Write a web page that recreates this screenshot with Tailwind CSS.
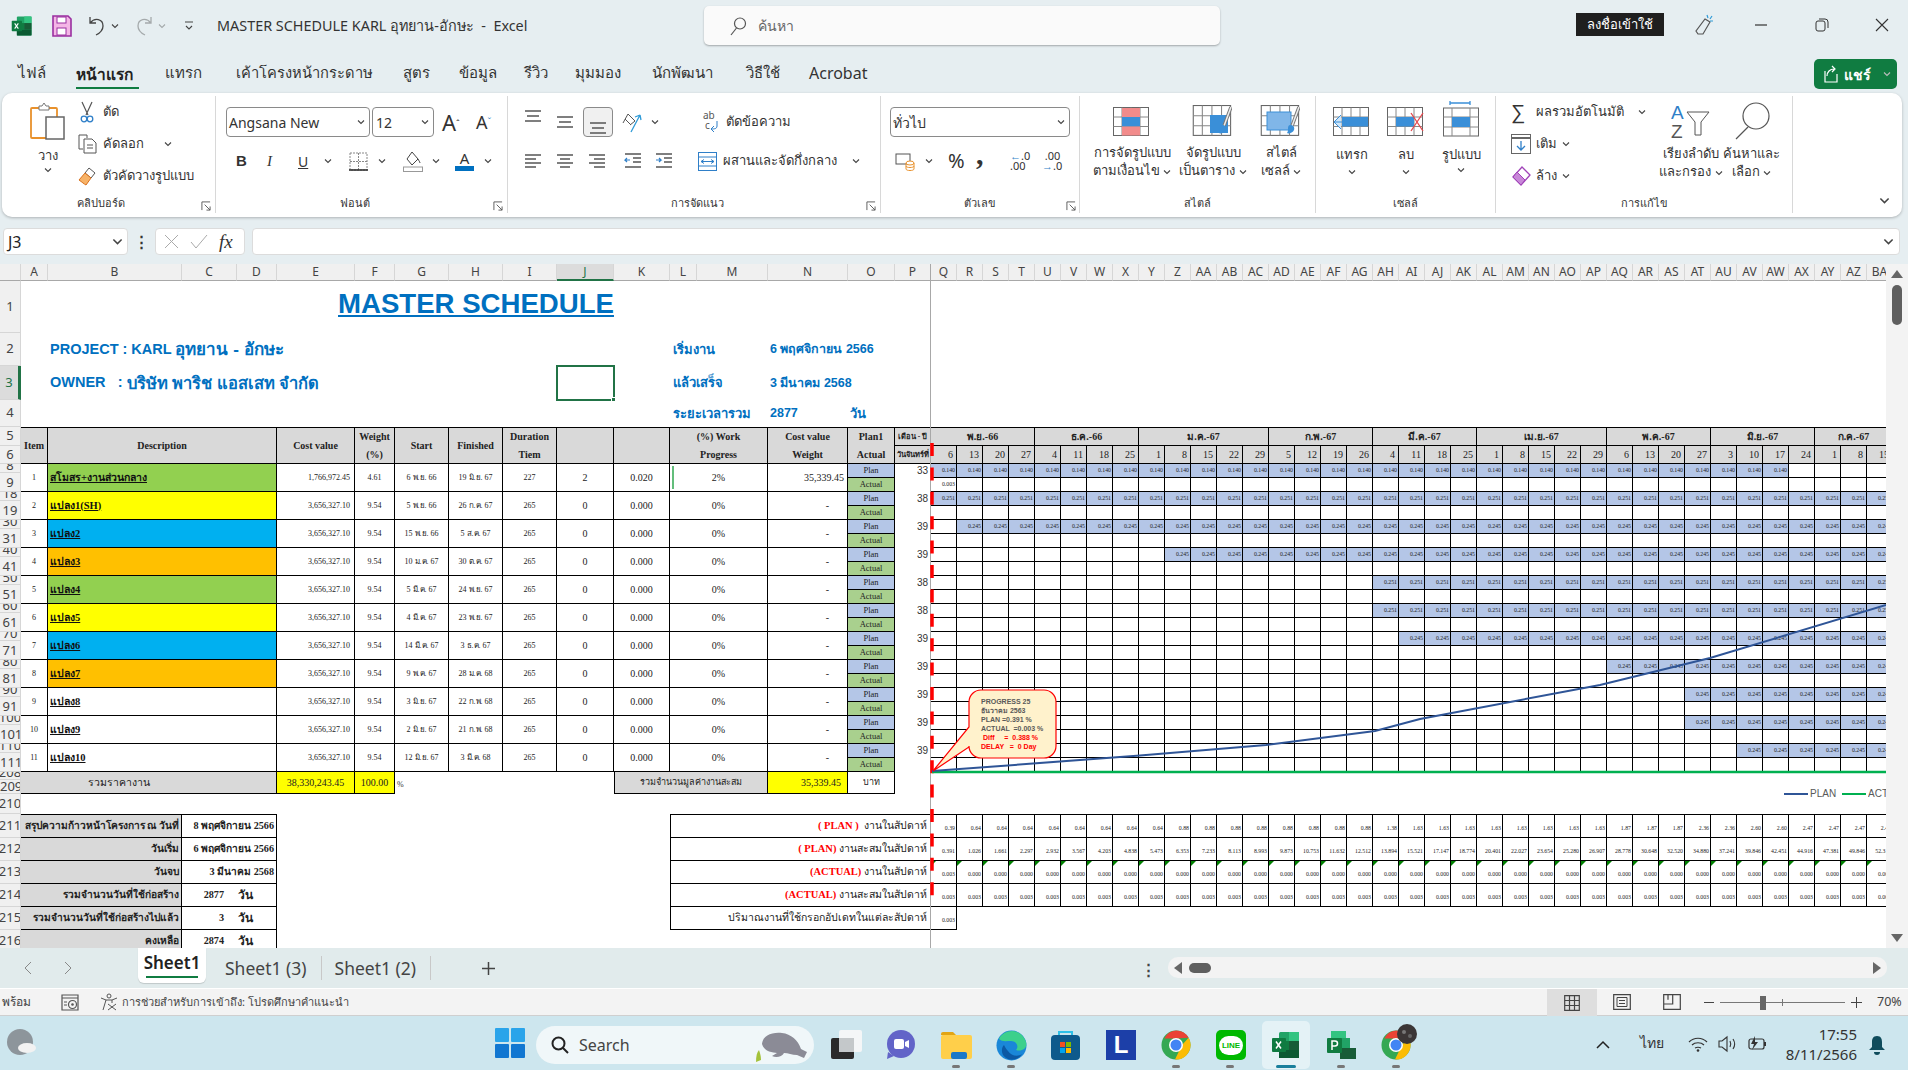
<!DOCTYPE html>
<html lang="th">
<head>
  <meta charset="utf-8" />
  <title>MASTER SCHEDULE KARL อุทยาน-อักษะ - Excel</title>
  <script src="https://cdn.jsdelivr.net/npm/@tailwindcss/browser@4"></script>
</head>
<body class="w-[1908px] h-[1070px] overflow-hidden flex flex-col bg-[#e6eef1] text-[#333] font-['Noto_Sans',sans-serif]">
  <!-- icon sprite -->
  <svg class="hidden">
    <symbol id="chev" viewBox="0 0 8 8"><path d="M1 2.5l3 3 3-3" fill="none" stroke="#444" stroke-width="1.1"/></symbol>
    <symbol id="launch" viewBox="0 0 11 11"><path d="M1 10V1h9M4 4l6 6M10 6v4H6" fill="none" stroke="#555"/></symbol>
    <symbol id="xl" viewBox="0 0 30 30"><rect x="8" y="2" width="20" height="26" rx="1.5" fill="#21a366"/><rect x="18" y="2" width="10" height="9" fill="#33c481"/><rect x="8" y="11" width="10" height="9" fill="#107c41"/><rect x="18" y="11" width="10" height="9" fill="#185c37"/><rect x="8" y="20" width="20" height="8" fill="#0b5a33"/><rect x="1" y="8" width="14" height="14" rx="1" fill="#0f7b41"/><path d="M5 11.500l5 7M10 11.500l-5 7" stroke="#fff" stroke-width="1.500"/></symbol>
    <symbol id="chrome" viewBox="0 0 30 30"><circle cx="15" cy="15" r="14.500" fill="#34a853"/><path d="M15 .5a14.500 14.500 0 0 1 12.600 7.200L15 8.500H3.300A14.500 14.500 0 0 1 15 .5z" fill="#ea4335"/><path d="M27.600 7.800A14.500 14.500 0 0 1 14 29.500L21 15z" fill="#fbbc05"/><circle cx="15" cy="15" r="7" fill="#fff"/><circle cx="15" cy="15" r="5.500" fill="#4285f4"/></symbol>
    <symbol id="gridicon" viewBox="0 0 38 30"><rect x=".5" y=".5" width="35" height="28" fill="#fff" stroke="#666"/><path d="M.5 10h35M.5 19.500h35M9 .5v28M18 .5v28M27 .5v28" stroke="#888" fill="none"/></symbol>
    <symbol id="lt" viewBox="0 0 18 18"><path d="M1 3h16M1 7h11M1 11h16M1 15h11" stroke="#555" stroke-width="1.500"/></symbol>
    <symbol id="ct" viewBox="0 0 18 18"><path d="M1 3h16M4 7h10M1 11h16M4 15h10" stroke="#555" stroke-width="1.500"/></symbol>
    <symbol id="rt" viewBox="0 0 18 18"><path d="M1 3h16M6 7h11M1 11h16M6 15h11" stroke="#555" stroke-width="1.500"/></symbol>
    <symbol id="brush" viewBox="0 0 14 30"><path d="M13 1L6 20" stroke="#777" stroke-width="3.500"/><path d="M13 1L6 20" stroke="#eee" stroke-width="1.500"/><path d="M4 19c3 0 5 2 4 5-1 3-6 4-7 3 1-1 1-3 1-5 0-2 1-3 2-3z" fill="#3a8fd8"/></symbol>
  </svg>

  <!-- title bar -->
  <header class="h-[52px] shrink-0 flex items-center relative">
    <svg class="w-[22px] h-[22px] ml-[11px]"><use href="#xl"/></svg>
    <svg class="w-[22px] h-[22px] ml-[18px]" viewBox="0 0 22 22"><path d="M2 1h15l3 3v17H2z" fill="#f4b6e6" stroke="#9a2fa0" stroke-width="1.600"/><rect x="6" y="2" width="9" height="6" fill="#fff" stroke="#9a2fa0"/><rect x="6" y="13" width="9" height="7" fill="#fff" stroke="#9a2fa0"/></svg>
    <svg class="w-[20px] h-[22px] ml-[14px]" viewBox="0 0 20 22"><path d="M3 2v6h6M3 8c5-6 13-4 13 3 0 4-3 7-7 9" fill="none" stroke="#444" stroke-width="1.300"/></svg>
    <svg class="w-[8px] h-[8px] ml-[4px]"><use href="#chev"/></svg>
    <svg class="w-[20px] h-[22px] ml-[15px] opacity-40" viewBox="0 0 20 22"><path d="M17 2v6h-6M17 8C12 2 4 4 4 11c0 4 3 7 7 9" fill="none" stroke="#444" stroke-width="1.300"/></svg>
    <svg class="w-[8px] h-[8px] ml-[4px] opacity-40"><use href="#chev"/></svg>
    <svg class="w-[10px] h-[10px] ml-[18px]" viewBox="0 0 10 10"><path d="M1 1h8M2 5l3 3 3-3" fill="none" stroke="#444" stroke-width="1.100"/></svg>
    <div class="ml-[23px] w-[400px] text-[14.400px] whitespace-nowrap">MASTER SCHEDULE KARL อุทยาน-อักษะ&nbsp; -&nbsp; Excel</div>
    <div class="absolute left-[704px] top-[6px] w-[516px] h-[39px] bg-[#fafafa] rounded-[5px] shadow-[0_1px_2px_rgba(0,0,0,.3)] flex items-center">
      <svg class="w-[18px] h-[20px] ml-[25px]" viewBox="0 0 18 20"><circle cx="11" cy="7.500" r="5.500" fill="none" stroke="#555" stroke-width="1.200"/><path d="M7.500 12L2 19" stroke="#555" stroke-width="1.200"/></svg>
      <span class="ml-[11px] text-[14px] text-[#666]">ค้นหา</span>
    </div>
    <div class="absolute left-[1576px] top-[13px] w-[88px] h-[23px] bg-[#1f1f1f] text-white text-[13px] flex items-center justify-center">ลงชื่อเข้าใช้</div>
    <svg class="absolute left-[1692px] top-[14px] w-[22px] h-[22px]" viewBox="0 0 22 22"><path d="M13 5l5 3-7 12-5 0-2-3z" fill="none" stroke="#555" stroke-width="1.200"/><path d="M15 1l1 3M20 2l-2 3M21 7l-3 0" stroke="#2f9bd8" stroke-width="1.200"/></svg>
    <svg class="absolute left-[1755px] top-[19px] w-[12px] h-[12px]" viewBox="0 0 12 12"><path d="M0 6h12" stroke="#333" stroke-width="1.200"/></svg>
    <svg class="absolute left-[1815px] top-[18px] w-[14px] h-[14px]" viewBox="0 0 14 14"><rect x="1" y="3" width="9" height="10" rx="2" fill="none" stroke="#333"/><path d="M4 1h6a3 3 0 0 1 3 3v6" fill="none" stroke="#333"/></svg>
    <svg class="absolute left-[1875px] top-[18px] w-[14px] h-[14px]" viewBox="0 0 14 14"><path d="M1 1l12 12M13 1L1 13" stroke="#333" stroke-width="1.100"/></svg>
  </header>

  <!-- ribbon tabs -->
  <nav class="h-[41px] shrink-0 relative flex items-center text-[15px] text-[#333] whitespace-nowrap">
    <span class="ml-[18px] w-[58px]">ไฟล์</span>
    <span class="w-[89px] h-[41px] flex items-start pt-[11px] relative font-bold text-[15.500px] text-[#222]">หน้าแรก<i class="absolute left-0 top-[35px] w-[63px] h-[2px] bg-[#107c41]"></i></span>
    <span class="w-[71px]">แทรก</span>
    <span class="w-[167px] text-[14.700px]">เค้าโครงหน้ากระดาษ</span>
    <span class="w-[56px]">สูตร</span>
    <span class="w-[65px]">ข้อมูล</span>
    <span class="w-[51px]">รีวิว</span>
    <span class="w-[77px]">มุมมอง</span>
    <span class="w-[94px]">นักพัฒนา</span>
    <span class="w-[63px]">วิธีใช้</span>
    <span class="text-[16px]">Acrobat</span>
    <div class="absolute left-[1814px] top-[7px] w-[83px] h-[30px] rounded-[5px] bg-[#107c41] text-white text-[14px] font-bold flex items-center pl-[10px]">
      <svg class="w-[14px] h-[18px]" viewBox="0 0 14 18"><path d="M1 6v11h12V9M3 11c0-4 3-7 7-7M8 1l3 3-3 3" fill="none" stroke="#fff" stroke-width="1.200"/></svg>
      <span class="ml-[6px]">แชร์</span>
      <svg class="w-[8px] h-[8px] ml-[12px] invert"><use href="#chev"/></svg>
    </div>
  </nav>

  <!-- ribbon -->
  <section class="h-[124px] shrink-0 mx-[2px] w-[1900px] bg-white rounded-[10px] shadow-[0_1px_3px_rgba(0,0,0,.25)] flex pt-[3px] pb-[4px] text-[13px] text-[#333] whitespace-nowrap relative">
    <!-- clipboard -->
    <div class="w-[214px] border-r border-[#d8d8d8] relative">
      <div class="h-[97px] flex pl-[24px]">
        <div class="w-[44px] flex flex-col items-center">
          <svg class="w-[38px] h-[38px] mt-[6px]" viewBox="0 0 38 38"><rect x="2" y="6" width="26" height="30" rx="1" fill="#fff" stroke="#e8912c" stroke-width="1.800"/><path d="M10 6V4h3l2-3 2 3h3v4H10z" fill="#fff" stroke="#777"/><rect x="17" y="15" width="18" height="22" fill="#fff" stroke="#666" stroke-width="1.500"/></svg>
          <span class="mt-[6px] leading-[18px]">วาง</span>
          <svg class="w-[8px] h-[8px] mt-[2px]"><use href="#chev"/></svg>
        </div>
        <div class="ml-[8px] flex flex-col">
          <div class="h-[32px] flex items-center"><svg class="w-[18px] h-[22px]" viewBox="0 0 18 22"><path d="M4 1l6 13M14 1L8 14" stroke="#555" stroke-width="1.200"/><circle cx="6" cy="18" r="2.800" fill="none" stroke="#2f7fc8" stroke-width="1.300"/><circle cx="12" cy="18" r="2.800" fill="none" stroke="#2f7fc8" stroke-width="1.300"/></svg><span class="ml-[7px]">ตัด</span></div>
          <div class="h-[32px] flex items-center"><svg class="w-[20px] h-[20px]" viewBox="0 0 20 20"><path d="M1 1h8v3M1 1v14h4" fill="none" stroke="#555"/><path d="M6 5h8l4 4v10H6z" fill="#fff" stroke="#555"/><path d="M9 11h6M9 14h6" stroke="#555"/></svg><span class="ml-[5px]">คัดลอก</span><svg class="w-[8px] h-[8px] ml-[20px]"><use href="#chev"/></svg></div>
          <div class="h-[32px] flex items-center"><svg class="w-[20px] h-[20px]" viewBox="0 0 20 20"><path d="M11 2l6 5-4 5-6-5z" fill="#fff" stroke="#555"/><path d="M7 7l6 5-5 7c-2-1-4-3-7-5z" fill="#f7b267" stroke="#d9701c"/></svg><span class="ml-[5px]">ตัวคัดวางรูปแบบ</span></div>
        </div>
      </div>
      <div class="h-[20px] pl-[75px] text-[11px] leading-[20px]">คลิปบอร์ด</div>
      <svg class="absolute left-[199px] top-[105px] w-[10px] h-[10px]"><use href="#launch"/></svg>
    </div>
    <!-- font -->
    <div class="w-[292px] border-r border-[#d8d8d8] relative">
      <div class="h-[97px] pl-[10px] pt-[11px]">
        <div class="flex items-center h-[30px]">
          <div class="w-[144px] h-[30px] border border-[#8a8a8a] rounded-[4px] flex items-center justify-between pl-[2px] pr-[4px] text-[14px]">Angsana New<svg class="w-[8px] h-[8px]"><use href="#chev"/></svg></div>
          <div class="w-[62px] h-[30px] ml-[2px] border border-[#8a8a8a] rounded-[4px] flex items-center justify-between pl-[3px] pr-[4px] text-[14px]">12<svg class="w-[8px] h-[8px]"><use href="#chev"/></svg></div>
          <span class="ml-[8px] text-[22px] w-[34px] leading-none">A<sup class="text-[9px]">ˆ</sup></span>
          <span class="text-[18px] leading-none">A<sup class="text-[9px] text-[#2f7fc8]">ˇ</sup></span>
        </div>
        <div class="flex items-center h-[24px] mt-[12px]">
          <span class="ml-[10px] w-[22px] text-[15px] font-bold font-['Liberation_Sans',sans-serif]">B</span>
          <span class="ml-[9px] w-[22px] text-[15px] italic font-['Liberation_Serif',serif]">I</span>
          <span class="ml-[9px] w-[16px] text-[14px] underline">U</span>
          <svg class="w-[8px] h-[8px] ml-[10px]"><use href="#chev"/></svg>
          <svg class="w-[19px] h-[19px] ml-[17px]" viewBox="0 0 19 19"><path d="M1 1h17v17H1zM9.500 1v17M1 9.500h17" fill="none" stroke="#888" stroke-dasharray="2 1"/><path d="M0 18h19" stroke="#333" stroke-width="1.600"/></svg>
          <svg class="w-[8px] h-[8px] ml-[10px]"><use href="#chev"/></svg>
          <svg class="w-[20px] h-[21px] ml-[17px]" viewBox="0 0 20 21"><path d="M9 1l6 7-6 6-5-6z" fill="none" stroke="#444"/><path d="M15 8c1 2 2 3 2 4" stroke="#444"/><rect x=".5" y="16" width="19" height="4.500" fill="#fff" stroke="#999"/></svg>
          <svg class="w-[8px] h-[8px] ml-[9px]"><use href="#chev"/></svg>
          <div class="ml-[15px] w-[19px] flex flex-col items-center leading-[15px] text-[15px]">A<i class="w-[19px] h-[5px] bg-[#0070c0]"></i></div>
          <svg class="w-[8px] h-[8px] ml-[10px]"><use href="#chev"/></svg>
        </div>
      </div>
      <div class="h-[20px] text-center text-[11px] leading-[20px] pr-[14px]">ฟอนต์</div>
      <svg class="absolute left-[277px] top-[105px] w-[10px] h-[10px]"><use href="#launch"/></svg>
    </div>
    <!-- alignment -->
    <div class="w-[373px] border-r border-[#d8d8d8] relative">
      <div class="h-[97px] pl-[16px] pt-[11px]">
        <div class="flex items-center h-[30px]">
          <svg class="w-[18px] h-[18px] -mt-[8px]" viewBox="0 0 18 18"><path d="M1 2h16M3 7h12M1 12h16" stroke="#555" stroke-width="1.500"/></svg>
          <svg class="w-[18px] h-[18px] ml-[14px]" viewBox="0 0 18 18"><path d="M1 4h16M3 9h12M1 14h16" stroke="#555" stroke-width="1.500"/></svg>
          <div class="ml-[9px] w-[30px] h-[30px] bg-[#f0f0f0] border border-[#8a8a8a] rounded-[4px] flex items-center justify-center"><svg class="w-[18px] h-[18px] mt-[8px]" viewBox="0 0 18 18"><path d="M1 6h16M3 11h12M1 16h16" stroke="#555" stroke-width="1.500"/></svg></div>
          <svg class="w-[20px] h-[22px] ml-[9px]" viewBox="0 0 20 22"><path d="M3 8l6 6M1 12l5-9 7 7-5 4" fill="none" stroke="#555"/><path d="M18 4L9 21M18 4l-5 2M18 4l1 5" fill="none" stroke="#2f9bd8" stroke-width="1.300"/></svg>
          <svg class="w-[8px] h-[8px] ml-[9px]"><use href="#chev"/></svg>
          <svg class="w-[18px] h-[24px] ml-[43px]" viewBox="0 0 18 24"><text x="1" y="9" font-size="10" fill="#555">ab</text><text x="3" y="19" font-size="10" fill="#555">c</text><path d="M15 11v5c0 3-3 3-6 3M9 19l3-3M9 19l3 3" fill="none" stroke="#2f7fc8"/></svg>
          <span class="ml-[6px]">ตัดข้อความ</span>
        </div>
        <div class="flex items-center h-[24px] mt-[12px]">
          <svg class="w-[18px] h-[18px]"><use href="#lt"/></svg>
          <svg class="w-[18px] h-[18px] ml-[14px]"><use href="#ct"/></svg>
          <svg class="w-[18px] h-[18px] ml-[14px]"><use href="#rt"/></svg>
          <svg class="w-[18px] h-[18px] ml-[18px]" viewBox="0 0 18 18"><path d="M1 2h16M9 6h8M9 10h8M1 15h16" stroke="#555" stroke-width="1.400"/><path d="M6 8H1l2-2M1 8l2 2" fill="none" stroke="#2f7fc8" stroke-width="1.200"/></svg>
          <svg class="w-[18px] h-[18px] ml-[13px]" viewBox="0 0 18 18"><path d="M1 2h16M9 6h8M9 10h8M1 15h16" stroke="#555" stroke-width="1.400"/><path d="M1 8h5L4 6M6 8l-2 2" fill="none" stroke="#2f7fc8" stroke-width="1.200"/></svg>
          <svg class="w-[19px] h-[19px] ml-[25px]" viewBox="0 0 19 19"><rect x=".5" y=".5" width="18" height="18" fill="#fff" stroke="#2f7fc8"/><path d="M0 5h19M0 14h19" stroke="#2f7fc8"/><path d="M3 9.500h13M3 9.500l3-2M3 9.500l3 2M16 9.500l-3-2M16 9.500l-3 2" fill="none" stroke="#2f7fc8"/></svg>
          <span class="ml-[6px]">ผสานและจัดกึ่งกลาง</span>
          <svg class="w-[8px] h-[8px] ml-[15px]"><use href="#chev"/></svg>
        </div>
      </div>
      <div class="h-[20px] text-center text-[11px] leading-[20px] pl-[6px]">การจัดแนว</div>
      <svg class="absolute left-[358px] top-[105px] w-[10px] h-[10px]"><use href="#launch"/></svg>
    </div>
    <!-- number -->
    <div class="w-[199px] border-r border-[#d8d8d8] relative">
      <div class="h-[97px] pl-[9px] pt-[11px]">
        <div class="w-[180px] h-[30px] border border-[#8a8a8a] rounded-[4px] flex items-center justify-between pl-[2px] pr-[4px] text-[14px]">ทั่วไป<svg class="w-[8px] h-[8px]"><use href="#chev"/></svg></div>
        <div class="flex items-center h-[24px] mt-[12px]">
          <svg class="w-[20px] h-[20px] ml-[5px]" viewBox="0 0 20 20"><rect x="1" y="3" width="14" height="10" fill="#fff" stroke="#555"/><ellipse cx="15" cy="12" rx="4" ry="2" fill="#fff" stroke="#e8912c"/><path d="M11 12v6c0 2 8 2 8 0v-6M11 15c0 2 8 2 8 0" fill="none" stroke="#e8912c"/></svg>
          <svg class="w-[8px] h-[8px] ml-[10px]"><use href="#chev"/></svg>
          <span class="ml-[15px] w-[24px] text-[20px] leading-none">%</span>
          <span class="ml-[4px] w-[14px] text-[30px] leading-none font-bold font-['Liberation_Serif',serif] -mt-[14px]">,</span>
          <span class="ml-[20px] w-[22px] text-[11px] leading-[10px] whitespace-pre"><b class="font-normal text-[#2f7fc8]">←</b>.0
.00</span>
          <span class="ml-[10px] w-[22px] text-[11px] leading-[10px] whitespace-pre">&nbsp;.00
<b class="font-normal text-[#2f7fc8]">→</b>.0</span>
        </div>
      </div>
      <div class="h-[20px] text-center text-[11px] leading-[20px]">ตัวเลข</div>
      <svg class="absolute left-[185px] top-[105px] w-[10px] h-[10px]"><use href="#launch"/></svg>
    </div>
    <!-- styles -->
    <div class="w-[236px] border-r border-[#d8d8d8]">
      <div class="h-[97px] flex text-[13px] leading-[18px] text-center">
        <div class="w-[96px] flex flex-col items-center pl-[8px]">
          <svg class="w-[38px] h-[30px] mt-[11px]" viewBox="0 0 38 30"><use href="#gridicon"/><rect x="9" y="1" width="18" height="9" fill="#f28b8b"/><rect x="9" y="10" width="18" height="9.500" fill="#3a8fd8"/><rect x="9" y="19.500" width="18" height="9" fill="#f28b8b"/></svg>
          <span class="mt-[6px]">การจัดรูปแบบ</span>
          <span>ตามเงื่อนไข <svg class="inline w-[8px] h-[8px]"><use href="#chev"/></svg></span>
        </div>
        <div class="w-[74px] flex flex-col items-center">
          <svg class="w-[42px] h-[32px] mt-[9px]" viewBox="0 0 42 32"><use href="#gridicon"/><rect x="18" y="10" width="18" height="18" fill="#3a8fd8"/><svg x="26" y="1" width="14" height="30"><use href="#brush"/></svg></svg>
          <span class="mt-[6px]">จัดรูปแบบ</span>
          <span>เป็นตาราง <svg class="inline w-[8px] h-[8px]"><use href="#chev"/></svg></span>
        </div>
        <div class="w-[62px] flex flex-col items-center">
          <svg class="w-[42px] h-[32px] mt-[9px]" viewBox="0 0 42 32"><use href="#gridicon"/><rect x="7" y="7" width="24" height="18" fill="#80b6e8" stroke="#3a8fd8"/><svg x="26" y="1" width="14" height="30"><use href="#brush"/></svg></svg>
          <span class="mt-[6px]">สไตล์</span>
          <span>เซลล์ <svg class="inline w-[8px] h-[8px]"><use href="#chev"/></svg></span>
        </div>
      </div>
      <div class="h-[20px] text-center text-[11px] leading-[20px]">สไตล์</div>
    </div>
    <!-- cells -->
    <div class="w-[180px] border-r border-[#d8d8d8]">
      <div class="h-[97px] flex pl-[9px] leading-[18px] text-center">
        <div class="w-[54px] flex flex-col items-center">
          <svg class="w-[38px] h-[30px] mt-[11px]" viewBox="0 0 38 30"><use href="#gridicon"/><rect x="9" y="10" width="26" height="9.500" fill="#3a8fd8"/><path d="M1 15h15M8 8l-7 7 7 7" fill="#cfe6f8" stroke="#3a8fd8"/></svg>
          <span class="mt-[8px]">แทรก</span>
          <svg class="w-[8px] h-[8px] mt-[5px]"><use href="#chev"/></svg>
        </div>
        <div class="w-[54px] flex flex-col items-center">
          <svg class="w-[38px] h-[30px] mt-[11px]" viewBox="0 0 38 30"><use href="#gridicon"/><rect x="9" y="10" width="18" height="9.500" fill="#3a8fd8"/><path d="M24 6l12 18M36 6L24 24" stroke="#e5484d" stroke-width="1.300"/></svg>
          <span class="mt-[8px]">ลบ</span>
          <svg class="w-[8px] h-[8px] mt-[5px]"><use href="#chev"/></svg>
        </div>
        <div class="w-[56px] flex flex-col items-center">
          <svg class="w-[36px] h-[36px] mt-[5px]" viewBox="0 0 36 36"><path d="M7 2h20M7 0v4M27 0v4" stroke="#3a8fd8" stroke-width="1.300"/><rect x=".5" y="7" width="35" height="28" fill="#fff" stroke="#666"/><path d="M.5 16h35M.5 26h35M9 7v28M27 7v28" stroke="#888"/><rect x="9" y="16" width="18" height="10" fill="#3a8fd8"/></svg>
          <span class="mt-[8px]">รูปแบบ</span>
          <svg class="w-[8px] h-[8px] mt-[3px]"><use href="#chev"/></svg>
        </div>
      </div>
      <div class="h-[20px] text-center text-[11px] leading-[20px]">เซลล์</div>
    </div>
    <!-- editing -->
    <div class="w-[297px] border-r border-[#d8d8d8]">
      <div class="h-[97px] flex pl-[15px]">
        <div class="w-[147px] flex flex-col">
          <div class="h-[32px] flex items-center"><span class="w-[20px] text-[20px] leading-none">∑</span><span class="ml-[5px]">ผลรวมอัตโนมัติ</span><svg class="w-[8px] h-[8px] ml-[14px]"><use href="#chev"/></svg></div>
          <div class="h-[32px] flex items-center"><svg class="w-[20px] h-[20px]" viewBox="0 0 20 20"><rect x=".5" y=".5" width="19" height="19" fill="#fff" stroke="#666"/><path d="M0 4h20" stroke="#666" stroke-width="2"/><path d="M10 7v9M6 12l4 4 4-4" fill="none" stroke="#2f7fc8" stroke-width="1.300"/></svg><span class="ml-[5px]">เติม</span><svg class="w-[8px] h-[8px] ml-[5px]"><use href="#chev"/></svg></div>
          <div class="h-[32px] flex items-center"><svg class="w-[20px] h-[20px]" viewBox="0 0 20 20"><path d="M11 1l8 8-9 10-8-8z" fill="#fff" stroke="#a043b8" stroke-width="1.300"/><path d="M6 6l8 8-4 5-8-8z" fill="#c887d8" stroke="#a043b8"/></svg><span class="ml-[5px]">ล้าง</span><svg class="w-[8px] h-[8px] ml-[5px]"><use href="#chev"/></svg></div>
        </div>
        <div class="w-[66px] flex flex-col items-center leading-[18px]">
          <svg class="w-[40px] h-[36px] mt-[7px]" viewBox="0 0 40 36"><text x="0" y="16" font-size="19" fill="#2f7fc8" font-family="Liberation Sans">A</text><text x="0" y="35" font-size="19" fill="#555" font-family="Liberation Sans">Z</text><path d="M16 9h22l-8 10v13h-6V19z" fill="#fff" stroke="#555"/></svg>
          <span class="mt-[5px]">เรียงลำดับ</span>
          <span>และกรอง <svg class="inline w-[8px] h-[8px]"><use href="#chev"/></svg></span>
        </div>
        <div class="w-[55px] flex flex-col items-center leading-[18px]">
          <svg class="w-[36px] h-[38px] mt-[6px]" viewBox="0 0 36 38"><circle cx="22" cy="14" r="13" fill="#fff" stroke="#555" stroke-width="1.200"/><path d="M14 25L2 37" stroke="#555" stroke-width="1.300"/></svg>
          <span class="mt-[4px]">ค้นหาและ</span>
          <span>เลือก <svg class="inline w-[8px] h-[8px]"><use href="#chev"/></svg></span>
        </div>
      </div>
      <div class="h-[20px] text-center text-[11px] leading-[20px]">การแก้ไข</div>
    </div>
    <svg class="absolute left-[1877px] top-[102px] w-[11px] h-[11px]"><use href="#chev"/></svg>
  </section>

  <!-- formula bar -->
  <div class="h-[27px] shrink-0 mt-[11px] flex items-center text-[14px]">
    <div class="ml-[3px] w-[125px] h-[27px] bg-white border border-[#dcdcdc] rounded-[4px] flex items-center justify-between px-[4px] text-[16px] text-[#222]">J3<svg class="w-[11px] h-[11px]"><use href="#chev"/></svg></div>
    <div class="w-[27px] text-center font-bold leading-none text-[15px]">⋮</div>
    <div class="w-[90px] h-[27px] bg-white border border-[#dcdcdc] rounded-[4px] flex items-center pl-[8px] gap-[11px]">
      <svg class="w-[15px] h-[15px]" viewBox="0 0 15 15"><path d="M1 1l13 13M14 1L1 14" stroke="#aaa"/></svg>
      <svg class="w-[18px] h-[15px]" viewBox="0 0 18 15"><path d="M1 8l5 6L17 1" fill="none" stroke="#aaa"/></svg>
      <span class="italic text-[19px] leading-none font-['Liberation_Serif',serif]">fx</span>
    </div>
    <div class="ml-[7px] w-[1648px] h-[27px] bg-white border border-[#dcdcdc] rounded-[4px] flex items-center justify-end pr-[5px]"><svg class="w-[11px] h-[11px]"><use href="#chev"/></svg></div>
  </div>

  <!-- worksheet -->
  <div class="h-[684px] shrink-0 mt-[9px] relative flex overflow-hidden">
    <div id="sheet" class="w-[1886px] h-[684px] grid overflow-hidden bg-white content-start"></div>
    <div class="w-[22px] h-[684px] bg-[#f3f3f3] flex flex-col items-center relative">
      <span class="w-0 h-0 mt-[6px] border-x-[6px] border-x-transparent border-b-[8px] border-b-[#666]"></span>
      <span class="w-[10px] h-[40px] mt-[7px] rounded-[5px] bg-[#5f5f5f]"></span>
      <span class="w-0 h-0 mt-auto mb-[6px] border-x-[6px] border-x-transparent border-t-[8px] border-t-[#666]"></span>
    </div>
    <!-- everything that floats over the cells: freeze line, today marker, chart, callout -->
    <svg class="absolute left-0 top-0 pointer-events-none" width="1886" height="684" viewBox="0 264 1886 684">
      <path d="M930.500 264v684" stroke="#a8a8a8"/>
      <path d="M932 443V897" stroke="#ff0000" stroke-width="3.500" stroke-dasharray="13 11.400"/>
      <path d="M932 772H1886" stroke="#00b050" stroke-width="2.500"/>
      <polyline points="932,771 1140,755.600 1266,745 1375,731 1420,719 1600,685 1710,658 1886,605" fill="none" stroke="#2f5597" stroke-width="2"/>
      <path d="M981 690H1044a12 12 0 0 1 12 12V746a12 12 0 0 1-12 12H981a12 12 0 0 1-12-12V747L933 771 969 727V702a12 12 0 0 1 12-12z" fill="#fff2cc" stroke="#ff0000" stroke-width="1.200"/>
      <path d="M1784 794h24" stroke="#2f5597" stroke-width="2"/>
      <path d="M1842 794h24" stroke="#00b050" stroke-width="2"/>
    </svg>
    <div class="absolute left-[981px] top-[433px] text-[7px] leading-[9px] font-bold text-[#595959] font-['Liberation_Sans',sans-serif] whitespace-pre">PROGRESS 25
ธันวาคม 2563
PLAN =0.391 %
ACTUAL  =0.003 %
<span class="text-[#ff0000]"> Diff     =  0.388 %
DELAY   =  0 Day</span></div>
    <div class="absolute left-[1810px] top-[523px] text-[10px] leading-[14px] text-[#595959] font-['Liberation_Sans',sans-serif]">PLAN</div>
    <div class="absolute left-[1868px] top-[523px] w-[18px] overflow-hidden text-[10px] leading-[14px] text-[#595959] font-['Liberation_Sans',sans-serif]">ACT</div>
  </div>

  <!-- sheet tabs -->
  <div class="h-[40px] shrink-0 flex items-center bg-[#e1ebec] relative text-[18px] text-[#444]">
    <svg class="ml-[23px] w-[9px] h-[14px]" viewBox="0 0 9 14"><path d="M8 1L2 7l6 6" fill="none" stroke="#888"/></svg>
    <svg class="ml-[32px] w-[9px] h-[14px]" viewBox="0 0 9 14"><path d="M1 1l6 6-6 6" fill="none" stroke="#888"/></svg>
    <div class="ml-[65px] w-[68px] h-[35px] mb-[5px] bg-white rounded-b-[6px] flex flex-col items-center pt-[2px] font-semibold text-[17px] text-[#222] shadow-[0_1px_1px_rgba(0,0,0,.15)] leading-[26px]">Sheet1<i class="w-[52px] h-[2px] bg-[#107c41]"></i></div>
    <span class="ml-[19px] text-[17.500px]">Sheet1 (3)</span>
    <i class="ml-[14px] h-[24px] border-l border-[#c8c8c8]"></i>
    <span class="ml-[13px] text-[17.500px]">Sheet1 (2)</span>
    <i class="ml-[14px] h-[24px] border-l border-[#c8c8c8]"></i>
    <svg class="ml-[50px] w-[15px] h-[15px]" viewBox="0 0 15 15"><path d="M7.500 1v13M1 7.500h13" stroke="#444" stroke-width="1.500"/></svg>
    <div class="absolute left-[1141px] top-[14px] text-[15px] font-bold leading-none">⋮</div>
    <div class="absolute left-[1168px] top-[9px] w-[719px] h-[21px] bg-[#f3f3f3] rounded-[10px] flex items-center">
      <span class="ml-[6px] w-0 h-0 border-y-[6px] border-y-transparent border-r-[8px] border-r-[#666]"></span>
      <span class="ml-[7px] w-[22px] h-[10px] rounded-[5px] bg-[#5f5f5f]"></span>
      <span class="ml-auto mr-[6px] w-0 h-0 border-y-[6px] border-y-transparent border-l-[8px] border-l-[#666]"></span>
    </div>
  </div>

  <!-- status bar -->
  <footer class="h-[28px] shrink-0 bg-[#f3f3f3] border-t border-white border-b-[1px] border-b-[#cfcfcf] flex items-center text-[12px] text-[#444] relative whitespace-nowrap">
    <span class="ml-[2px] w-[59px]">พร้อม</span>
    <svg class="w-[18px] h-[17px]" viewBox="0 0 18 17"><path d="M1 1h16v15H1zM1 4h16" fill="none" stroke="#555" stroke-width="1.200"/><circle cx="11.500" cy="10.500" r="4" fill="none" stroke="#555" stroke-width="1.200"/><circle cx="11.500" cy="10.500" r="1.300" fill="#555"/><path d="M3 8h3M3 11h3" stroke="#555"/></svg>
    <svg class="ml-[21px] w-[18px] h-[18px]" viewBox="0 0 18 18"><circle cx="9" cy="3" r="2" fill="none" stroke="#555"/><path d="M1 5l5 2h6l5-2M6 7l-3 10M12 7v3M8 11l8 6M16 11l-8 6" fill="none" stroke="#555"/></svg>
    <span class="ml-[4px] text-[11px]">การช่วยสำหรับการเข้าถึง: โปรดศึกษาคำแนะนำ</span>
    <div class="absolute left-[1547px] top-0 w-[50px] h-[27px] bg-[#dedede] flex items-center justify-center"><svg class="w-[16px] h-[16px]" viewBox="0 0 16 16"><path d="M.7.700h14.600v14.600H.7zM.7 5.500h14.600M.7 10.500h14.600M5.500.7v14.600M10.500.7v14.600" fill="none" stroke="#444" stroke-width="1.200"/></svg></div>
    <svg class="absolute left-[1613px] top-[5px] w-[18px] h-[16px]" viewBox="0 0 18 16"><path d="M.7.700h16.600v14.600H.7z" fill="none" stroke="#444" stroke-width="1.200"/><path d="M4 3.500h10v9H4zM6 6.500h6M6 9.500h6" fill="none" stroke="#444"/></svg>
    <svg class="absolute left-[1663px] top-[5px] w-[18px] h-[16px]" viewBox="0 0 18 16"><path d="M.7.700h16.600v14.600H.7zM.7 10h9V.7M5 .7v5" fill="none" stroke="#444" stroke-width="1.200"/></svg>
    <i class="absolute left-[1704px] top-[13px] w-[10px] h-[1px] bg-[#444]"></i>
    <i class="absolute left-[1720px] top-[13px] w-[125px] h-[1px] bg-[#777]"></i>
    <i class="absolute left-[1782px] top-[10px] w-[1px] h-[7px] bg-[#777]"></i>
    <i class="absolute left-[1760px] top-[7px] w-[6px] h-[14px] bg-[#666]"></i>
    <svg class="absolute left-[1851px] top-[8px] w-[11px] h-[11px]" viewBox="0 0 11 11"><path d="M5.500 0v11M0 5.500h11" stroke="#444"/></svg>
    <span class="absolute left-[1877px] top-[4px] text-[12.500px]">70%</span>
  </footer>

  <!-- taskbar -->
  <div class="h-[54px] shrink-0 bg-[#cde6ee] relative">
    <svg class="absolute left-[7px] top-[13px] w-[30px] h-[28px]" viewBox="0 0 30 28"><circle cx="13" cy="13" r="13" fill="#8d959b"/><ellipse cx="20" cy="19" rx="9" ry="5" fill="#f2f2f2"/></svg>
    <svg class="absolute left-[495px] top-[12px] w-[30px] h-[30px]" viewBox="0 0 30 30"><rect x="0" y="0" width="14" height="14" rx="1" fill="#2aa4ea"/><rect x="16" y="0" width="14" height="14" rx="1" fill="#2aa4ea"/><rect x="0" y="16" width="14" height="14" rx="1" fill="#1177d1"/><rect x="16" y="16" width="14" height="14" rx="1" fill="#1177d1"/></svg>
    <div class="absolute left-[536px] top-[10px] w-[278px] h-[38px] bg-[#f0f7f9] rounded-[19px] flex items-center text-[16px] text-[#444]">
      <svg class="ml-[15px] w-[18px] h-[18px]" viewBox="0 0 18 18"><circle cx="7.500" cy="7.500" r="6" fill="none" stroke="#222" stroke-width="2"/><path d="M12 12l5 5" stroke="#222" stroke-width="2"/></svg>
      <span class="ml-[10px]">Search</span>
      <svg class="absolute left-[218px] top-[4px] w-[54px] h-[34px]" viewBox="0 0 54 34"><path d="M2 32c0-6 1-10 3-12 1 3 2 6 2 10z" fill="#a3c23a"/><path d="M8 14C9 5 18 2 28 3c9 1 16 7 19 16l6 3-3 6-7-3c-5 0-9-2-13-2-2 4-8 5-12 3l5-3c-4-1-12 0-15-9z" fill="#8b8b96"/></svg>
    </div>
    <svg class="absolute left-[831px] top-[14px] w-[32px] h-[30px]" viewBox="0 0 32 30"><rect x="8" y="0" width="23" height="22" rx="2" fill="#f4f6f7"/><rect x="0" y="8" width="23" height="21" rx="2" fill="#2a2a2a"/><rect x="8" y="8" width="15" height="14" fill="#c4c8ca"/></svg>
    <svg class="absolute left-[886px] top-[14px] w-[30px] h-[30px]" viewBox="0 0 30 30"><circle cx="15" cy="14" r="14" fill="#6264c8"/><path d="M2 22l-1 7 7-3z" fill="#6264c8"/><rect x="8" y="9" width="10" height="10" rx="2" fill="#fff"/><path d="M19 12l4-2v8l-4-2z" fill="#fff"/></svg>
    <svg class="absolute left-[941px] top-[15px] w-[31px] h-[28px]" viewBox="0 0 31 28"><path d="M0 3a2 2 0 0 1 2-2h10l3 3h-15z" fill="#e2a514"/><rect x="0" y="4" width="31" height="24" rx="2" fill="#ffcf4a"/><rect x="10" y="21" width="16" height="7" rx="2" fill="#1b78c8"/></svg>
    <svg class="absolute left-[996px] top-[14px] w-[31px] h-[31px]" viewBox="0 0 31 31"><circle cx="15.500" cy="15.500" r="15" fill="#1a87d8"/><path d="M3 9C8-2 26-2 30 12c2 7-5 10-10 8 3-3 1-9-5-9-5 0-9 1-12-2z" fill="#3cd08c"/><path d="M12 21c3 5 10 6 14 3-5 8-15 7-19 1-2-4-1-8 1-10 1 2 2 4 4 6z" fill="#0c59a4"/></svg>
    <svg class="absolute left-[1051px] top-[14px] w-[29px] h-[30px]" viewBox="0 0 29 30"><path d="M8 5V2h13v3" fill="none" stroke="#2ec0e8" stroke-width="2"/><rect x="0" y="5" width="29" height="25" rx="4" fill="#0e5a8c"/><rect x="9" y="12" width="5" height="5" fill="#f25022"/><rect x="15" y="12" width="5" height="5" fill="#7fba00"/><rect x="9" y="18" width="5" height="5" fill="#00a4ef"/><rect x="15" y="18" width="5" height="5" fill="#ffb900"/></svg>
    <div class="absolute left-[1106px] top-[14px] w-[30px] h-[30px] bg-[#1c3fa8] text-white font-bold text-[24px] leading-[30px] text-center font-['Liberation_Sans',sans-serif]">L</div>
    <svg class="absolute left-[1161px] top-[14px] w-[30px] h-[30px]"><use href="#chrome"/></svg>
    <div class="absolute left-[1216px] top-[14px] w-[30px] h-[30px] rounded-[5px] bg-[#00b900] flex items-center justify-center"><div class="w-[24px] h-[19px] rounded-[10px] bg-white text-[#00b900] text-[8px] font-bold text-center leading-[19px] font-['Liberation_Sans',sans-serif]">LINE</div></div>
    <div class="absolute left-[1262px] top-[5px] w-[48px] h-[48px] rounded-[5px] bg-[#e4f2f6] flex items-center justify-center"><svg class="w-[30px] h-[30px]"><use href="#xl"/></svg><i class="absolute left-[14px] top-[44px] w-[20px] h-[3px] rounded-[2px] bg-[#1a7f9c]"></i></div>
    <svg class="absolute left-[1326px] top-[14px] w-[30px] h-[30px]" viewBox="0 0 30 30"><rect x="5" y="1" width="15" height="9" fill="#33c481"/><rect x="10" y="8" width="14" height="12" fill="#21a366"/><rect x="14" y="18" width="16" height="11" fill="#185c37"/><rect x="1" y="8" width="15" height="15" rx="1" fill="#107c41"/><path d="M6 20v-9h3a2.500 2.500 0 0 1 0 5H6" fill="none" stroke="#fff" stroke-width="1.500"/></svg>
    <svg class="absolute left-[1381px] top-[14px] w-[30px] h-[30px]"><use href="#chrome"/></svg>
    <svg class="absolute left-[1397px] top-[8px] w-[20px] h-[20px]" viewBox="0 0 20 20"><circle cx="10" cy="10" r="10" fill="#3b3636"/><circle cx="7" cy="8" r="2" fill="#777"/><circle cx="13" cy="12" r="2" fill="#666"/></svg>
    <i class="absolute left-[1226px] top-[49px] w-[8px] h-[3px] rounded-[2px] bg-[#777]"></i>
    <i class="absolute left-[952px] top-[49px] w-[8px] h-[3px] rounded-[2px] bg-[#777]"></i>
    <i class="absolute left-[1007px] top-[49px] w-[8px] h-[3px] rounded-[2px] bg-[#777]"></i>
    <i class="absolute left-[1172px] top-[49px] w-[8px] h-[3px] rounded-[2px] bg-[#777]"></i>
    <i class="absolute left-[1337px] top-[49px] w-[8px] h-[3px] rounded-[2px] bg-[#777]"></i>
    <i class="absolute left-[1392px] top-[49px] w-[8px] h-[3px] rounded-[2px] bg-[#777]"></i>
    <svg class="absolute left-[1596px] top-[24px] w-[14px] h-[9px]" viewBox="0 0 14 9"><path d="M1 8l6-6 6 6" fill="none" stroke="#222" stroke-width="1.500"/></svg>
    <span class="absolute left-[1640px] top-[16px] text-[14px] text-[#333]">ไทย</span>
    <svg class="absolute left-[1688px] top-[20px] w-[20px] h-[16px]" viewBox="0 0 20 16"><path d="M1 6c5-5 13-5 18 0M4 9c3-3 9-3 12 0M7 12c2-1 4-1 6 0" fill="none" stroke="#333" stroke-width="1.200"/><circle cx="10" cy="14.500" r="1.300" fill="#333"/></svg>
    <svg class="absolute left-[1718px] top-[19px] w-[20px] h-[18px]" viewBox="0 0 20 18"><path d="M1 6h3l5-4v14l-5-4H1z" fill="none" stroke="#333" stroke-width="1.100"/><path d="M12 6c1 2 1 4 0 6M15 4c2 3 2 7 0 10" fill="none" stroke="#333" stroke-width="1.100"/></svg>
    <svg class="absolute left-[1748px] top-[19px] w-[20px] h-[18px]" viewBox="0 0 20 18"><rect x="1" y="4" width="15" height="10" rx="2" fill="none" stroke="#333" stroke-width="1.200"/><path d="M17 7v4" stroke="#333" stroke-width="2"/><path d="M7 1L3 9h3l-2 6 6-8H7z" fill="#333"/></svg>
    <div class="absolute right-[51px] top-[8px] text-right text-[15px] leading-[20px] text-[#333]">17:55<br/>8/11/2566</div>
    <svg class="absolute left-[1869px] top-[19px] w-[16px] h-[20px]" viewBox="0 0 16 20"><path d="M8 1c-4 0-5 3-5 6v5l-3 3h16l-3-3V7c0-3-1-6-5-6z" fill="#0f4c5c"/><path d="M5 17a3 3 0 0 0 6 0z" fill="#0f4c5c"/></svg>
  </div>

  <script>
    // worksheet cells come from these arrays
    const sheet = document.getElementById('sheet');
    const colW = [21, 27, 134, 55, 40, 78, 40, 54, 54, 54, 57, 56, 27, 71, 80, 47, 36].concat(Array(37).fill(26));
    const rowH = [17, 52, 33, 34, 27, 19, 18].concat(Array(22).fill(14), [11, 11, 20, 24, 23, 23, 23, 23, 23]);
    sheet.style.gridTemplateColumns = colW.map(w => w + 'px').join(' ');
    sheet.style.gridTemplateRows = rowH.map(h => h + 'px').join(' ');

    function cell(col, row, cs, rs, cls, html) {
      const d = document.createElement('div');
      d.className = cls;
      d.style.gridArea = `${row} / ${col} / span ${rs} / span ${cs}`;
      d.innerHTML = html === undefined ? '' : html;
      sheet.appendChild(d);
      return d;
    }

    const HEAD = "flex items-center justify-center bg-[#f0f0f0] border-r border-b border-r-[#d6d6d6] border-b-[#a8a8a8] text-[12px] text-[#444] overflow-hidden";
    const HEADON = "flex items-center justify-center bg-[#dcdcdc] border-r border-r-[#d6d6d6] border-b-2 border-b-[#217346] text-[12px] text-[#217346] overflow-hidden";
    const RH = "flex items-center justify-center bg-[#f0f0f0] border-r border-b border-[#d6d6d6] text-[13px] text-[#444] overflow-hidden";
    const RHON = "flex items-center justify-center bg-[#dcdcdc] border-r-[3px] border-r-[#217346] border-b border-b-[#d6d6d6] text-[13px] text-[#217346] overflow-hidden";
    const RHSPLIT = "flex flex-col bg-[#f0f0f0] border-r border-[#d6d6d6] text-[13px] text-[#444] overflow-hidden text-center";
    const TH = "flex flex-col items-center justify-center bg-[#d9d9d9] border-r border-t border-b border-black text-[10px] leading-[18px] font-bold text-[#222] font-['Liberation_Serif',serif] overflow-hidden";
    const THR = "flex items-center justify-end pr-[3px] bg-[#d9d9d9] border-r border-b border-black text-[10px] text-[#222] font-['Liberation_Serif',serif] overflow-hidden";
    const TH2 = "flex items-center justify-center bg-[#d9d9d9] border-r border-t border-b border-black text-[10px] font-bold text-[#222] font-['Liberation_Serif',serif] overflow-hidden whitespace-nowrap";
    const TH3 = "flex items-center justify-center bg-[#d9d9d9] border-r border-t border-b border-black text-[7.500px] font-bold text-[#222] font-['Liberation_Serif',serif] overflow-hidden whitespace-nowrap";
    const TH4 = "flex items-center justify-center bg-[#d9d9d9] border-r border-b border-black text-[7.500px] font-bold text-[#222] font-['Liberation_Serif',serif] overflow-hidden whitespace-nowrap";
    const TD = "flex items-center justify-center border-r border-b border-black text-[8px] text-[#222] font-['Liberation_Serif',serif] overflow-hidden whitespace-nowrap";
    const TD10 = "flex items-center justify-center border-r border-b border-black text-[10px] text-[#222] font-['Liberation_Serif',serif] overflow-hidden whitespace-nowrap";
    const TD9 = "flex items-center justify-center border-r border-b border-black text-[9px] text-[#222] font-['Liberation_Serif',serif] overflow-hidden whitespace-nowrap";
    const TDR = "flex items-center justify-end pr-[4px] border-r border-b border-black text-[8px] text-[#222] font-['Liberation_Serif',serif] overflow-hidden whitespace-nowrap";
    const TDR10 = "flex items-center justify-end border-r border-b border-black text-[10px] text-[#222] font-['Liberation_Serif',serif] overflow-hidden whitespace-nowrap";
    const GW = "flex items-center justify-end pr-[1px] border-r border-b border-black text-[5.800px] text-[#222] font-['Liberation_Serif',serif] overflow-hidden";
    const GB = "flex items-center justify-end pr-[1px] border-r border-b border-black bg-[#b4c6e7] text-[5.800px] text-[#222] font-['Liberation_Serif',serif] overflow-hidden";
    const GV = "relative flex items-center justify-end pr-[1px] pt-[4px] border-r border-b border-black text-[5.800px] text-[#222] font-['Liberation_Serif',serif] overflow-hidden";
    const BLUE = "text-[14.500px] font-bold text-[#0070c0] font-['Liberation_Sans',sans-serif] whitespace-pre flex items-center overflow-visible pl-[2px]";
    const SUML = "flex items-center justify-end pr-[2px] bg-[#d9d9d9] border-r border-b border-black text-[10.200px] font-bold text-[#222] font-['Liberation_Serif',serif] overflow-hidden whitespace-nowrap";
    const SUMT = "flex items-center justify-center bg-[#d9d9d9] border-r border-b border-black text-[10.500px] text-[#222] font-['Liberation_Serif',serif] overflow-hidden whitespace-nowrap";
    const SUMS = "flex items-center justify-center bg-[#d9d9d9] border-l border-r border-b border-black text-[9px] text-[#222] font-['Liberation_Serif',serif] overflow-hidden whitespace-nowrap";
    const SUMV = "flex items-center justify-end pr-[2px] border-r border-b border-black text-[10.200px] font-bold text-[#222] font-['Liberation_Serif',serif] overflow-hidden whitespace-nowrap";
    const WKL = "flex items-center justify-end pr-[3px] border-l border-r border-b border-black text-[10.500px] text-[#222] font-['Liberation_Serif',serif] overflow-hidden whitespace-nowrap";

    // column letters
    const letters = ['A','B','C','D','E','F','G','H','I','J','K','L','M','N','O','P','Q','R','S','T','U','V','W','X','Y','Z','AA','AB','AC','AD','AE','AF','AG','AH','AI','AJ','AK','AL','AM','AN','AO','AP','AQ','AR','AS','AT','AU','AV','AW','AX','AY','AZ','BA'];
    cell(1, 1, 1, 1, HEAD);
    letters.forEach((l, i) => cell(i + 2, 1, 1, 1, l === 'J' ? HEADON : HEAD, l));

    // row numbers
    [[2, '1'], [3, '2'], [5, '4'], [6, '5'], [7, '6']].forEach(([r, t]) => cell(1, r, 1, 1, RH, t));
    cell(1, 4, 1, 1, RHON, '3');
    [[8, 9], [18, 19], [30, 31], [40, 41], [50, 51], [60, 61], [70, 71], [80, 81], [90, 91], [100, 101], [110, 111]].forEach(([a, b], i) => {
      cell(1, 8 + i * 2, 1, 2, RHSPLIT, `<div class="h-[9px] border-b border-[#d6d6d6] flex items-end justify-center leading-[14px]">${a}</div><div class="h-[19px] border-b border-[#d6d6d6] leading-[18px]">${b}</div>`);
    });
    cell(1, 30, 1, 2, RHSPLIT, '<div class="h-[8px] border-b border-[#d6d6d6] flex items-end justify-center leading-[14px]">208</div><div class="h-[14px] border-b border-[#d6d6d6] leading-[13px]">209</div>');
    ['210', '211', '212', '213', '214', '215', '216'].forEach((t, i) => cell(1, 32 + i, 1, 1, RH, t));

    // top block
    cell(6, 2, 7, 1, "flex items-center justify-center pb-[6px] pl-[5px] text-[27.600px] font-bold underline decoration-2 underline-offset-2 text-[#0070c0] font-['Liberation_Sans',sans-serif] whitespace-nowrap", 'MASTER SCHEDULE');
    cell(3, 3, 8, 1, BLUE, 'PROJECT : KARL <span class="text-[17px]">อุทยาน - อักษะ</span>');
    cell(3, 4, 8, 1, BLUE, 'OWNER   : <span class="text-[16.500px]">บริษัท พาริช แอสเสท จำกัด</span>');
    cell(11, 4, 1, 1, "relative border-2 border-[#217346] -mx-[1px] -my-[1px] z-10", '<i class="absolute -right-[3px] -bottom-[3px] w-[5px] h-[5px] bg-[#217346] border border-white"></i>');
    [[3, 'เริ่มงาน', '6 พฤศจิกายน 2566'], [4, 'แล้วเสร็จ', '3 มีนาคม 2568'], [5, 'ระยะเวลารวม', '2877']].forEach(([r, a, b]) => {
      cell(13, r, 2, 1, "flex items-center pl-[3px] text-[13px] font-bold text-[#0070c0] font-['Liberation_Sans',sans-serif] whitespace-nowrap", a);
      cell(15, r, 2, 1, "flex items-center pl-[2px] text-[12.500px] font-bold text-[#0070c0] font-['Liberation_Sans',sans-serif] whitespace-nowrap", b);
    });
    cell(16, 5, 1, 1, "flex items-center pl-[2px] text-[13px] font-bold text-[#0070c0] font-['Liberation_Sans',sans-serif]", 'วัน');

    // table header
    cell(2, 6, 1, 2, TH, 'Item');
    cell(3, 6, 3, 2, TH, 'Description');
    cell(6, 6, 1, 2, TH, 'Cost value');
    cell(7, 6, 1, 2, TH, '<span>Weight</span><span>(%)</span>');
    cell(8, 6, 1, 2, TH, 'Start');
    cell(9, 6, 1, 2, TH, 'Finished');
    cell(10, 6, 1, 2, TH, '<span>Duration</span><span>Tiem</span>');
    cell(11, 6, 1, 2, TH);
    cell(12, 6, 1, 2, TH);
    cell(13, 6, 2, 2, TH, '<span>(%) Work</span><span>Progress</span>');
    cell(15, 6, 1, 2, TH, '<span>Cost value</span><span>Weight</span>');
    cell(16, 6, 1, 2, TH, '<span>Plan1</span><span>Actual</span>');
    cell(17, 6, 1, 1, TH3, 'เดือน - ปี');
    cell(17, 7, 1, 1, TH4, 'วันจันทร์ที่');

    // months and week dates
    [['พ.ย.-66', 4], ['ธ.ค.-66', 4], ['ม.ค.-67', 5], ['ก.พ.-67', 4], ['มี.ค.-67', 4], ['เม.ย.-67', 5], ['พ.ค.-67', 4], ['มิ.ย.-67', 4], ['ก.ค.-67', 3]].reduce((c, [m, n]) => {
      cell(c, 6, n, 1, TH2, m);
      return c + n;
    }, 18);
    [6, 13, 20, 27, 4, 11, 18, 25, 1, 8, 15, 22, 29, 5, 12, 19, 26, 4, 11, 18, 25, 1, 8, 15, 22, 29, 6, 13, 20, 27, 3, 10, 17, 24, 1, 8, 15].forEach((d, i) => cell(18 + i, 7, 1, 1, THR, d));

    // items
    const items = [
      ['สโมสร+งานส่วนกลาง', 'bg-[#92d050]', '1,766,972.45', '4.61', '6 พ.ย. 66', '19 มิ.ย. 67', '227', 33, 0, 32, '0.140'],
      ['แปลง1(SH)', 'bg-[#ffff00]', '3,656,327.10', '9.54', '5 พ.ย. 66', '26 ก.ค. 67', '265', 38, 0, 36, '0.251'],
      ['แปลง2', 'bg-[#00b0f0]', '3,656,327.10', '9.54', '15 พ.ย. 66', '5 ส.ค. 67', '265', 39, 1, 36, '0.245'],
      ['แปลง3', 'bg-[#ffc000]', '3,656,327.10', '9.54', '10 ม.ค. 67', '30 ต.ค. 67', '265', 39, 9, 36, '0.245'],
      ['แปลง4', 'bg-[#92d050]', '3,656,327.10', '9.54', '5 มี.ค. 67', '24 พ.ย. 67', '265', 38, 17, 36, '0.251'],
      ['แปลง5', 'bg-[#ffff00]', '3,656,327.10', '9.54', '4 มี.ค. 67', '23 พ.ย. 67', '265', 38, 17, 36, '0.251'],
      ['แปลง6', 'bg-[#00b0f0]', '3,656,327.10', '9.54', '14 มี.ค. 67', '3 ธ.ค. 67', '265', 39, 18, 36, '0.245'],
      ['แปลง7', 'bg-[#ffc000]', '3,656,327.10', '9.54', '9 พ.ค. 67', '28 ม.ค. 68', '265', 39, 26, 36, '0.245'],
      ['แปลง8', 'bg-white', '3,656,327.10', '9.54', '3 มิ.ย. 67', '22 ก.พ. 68', '265', 39, 29, 36, '0.245'],
      ['แปลง9', 'bg-white', '3,656,327.10', '9.54', '2 มิ.ย. 67', '21 ก.พ. 68', '265', 39, 29, 36, '0.245'],
      ['แปลง10', 'bg-white', '3,656,327.10', '9.54', '12 มิ.ย. 67', '3 มี.ค. 68', '265', 39, 31, 36, '0.245'],
    ];
    const DESC = "flex items-center pl-[2px] border-r border-b border-black text-[10.500px] font-bold underline text-[#111] font-['Liberation_Serif',serif] whitespace-nowrap overflow-hidden ";
    const PLAN = "flex items-center justify-center border-r border-b border-black bg-[#b4c6e7] text-[8.500px] text-[#222] font-['Liberation_Serif',serif]";
    const ACT = "flex items-center justify-center border-r border-b border-black bg-[#a9d08e] text-[8.500px] text-[#222] font-['Liberation_Serif',serif]";
    items.forEach((it, i) => {
      const r = 8 + i * 2;
      cell(2, r, 1, 2, TD, i + 1);
      cell(3, r, 3, 2, DESC + it[1], it[0]);
      cell(6, r, 1, 2, TDR, it[2]);
      cell(7, r, 1, 2, TD, it[3]);
      cell(8, r, 1, 2, TD, it[4]);
      cell(9, r, 1, 2, TD, it[5]);
      cell(10, r, 1, 2, TD, it[6]);
      cell(11, r, 1, 2, TD10, i === 0 ? '2' : '0');
      cell(12, r, 1, 2, TD10, i === 0 ? '0.020' : '0.000');
      cell(13, r, 2, 2, TD10 + ' relative', (i === 0 ? '<i class="absolute left-[2px] top-[2px] w-[2px] h-[23px] bg-[#63be7b]"></i>2%' : '0%'));
      cell(15, r, 1, 2, TDR10 + (i === 0 ? ' pr-[3px]' : ' pr-[18px]'), i === 0 ? '35,339.45' : '-');
      cell(16, r, 1, 1, PLAN, 'Plan');
      cell(16, r + 1, 1, 1, ACT, 'Actual');
      cell(17, r, 1, 2, "flex justify-end pr-[3px] text-[10px] leading-[11px] pt-[1px] text-[#333] font-['Liberation_Sans',sans-serif]", it[7]);
      for (let k = 0; k < 37; k++) {
        const on = k >= it[8] && k <= it[9];
        cell(18 + k, r, 1, 1, on ? GB : GW, on ? it[10] : '');
        cell(18 + k, r + 1, 1, 1, GW, i === 0 && k === 0 ? '0.003' : '');
      }
    });

    // totals
    cell(2, 30, 4, 2, SUMT + ' pr-[60px]', 'รวมราคางาน');
    cell(6, 30, 1, 2, TD10 + ' bg-[#ffff00]', '38,330,243.45');
    cell(7, 30, 1, 2, TD10 + ' bg-[#ffff00]', '100.00');
    cell(8, 30, 1, 2, "flex items-center pl-[2px] pt-[3px] text-[8px] font-['Liberation_Serif',serif]", '%');
    cell(12, 30, 3, 2, SUMS, 'รวมจำนวนมูลค่างานสะสม');
    cell(15, 30, 1, 2, TDR10 + ' bg-[#ffff00] pr-[6px]', '35,339.45');
    cell(16, 30, 1, 2, TD9, 'บาท');

    // project summary, lower left
    [['สรุปความก้าวหน้าโครงการ ณ วันที่', '8 พฤศจิกายน 2566'], ['วันเริ่ม', '6 พฤศจิกายน 2566'], ['วันจบ', '3 มีนาคม 2568'], ['รวมจำนวนวันที่ใช้ก่อสร้าง', '2877', 1], ['รวมจำนวนวันที่ใช้ก่อสร้างไปแล้ว', '3', 1], ['คงเหลือ', '2874', 1]].forEach(([l, v, days], i) => {
      const r = 33 + i;
      cell(2, r, 2, 1, SUML + (i === 0 ? ' border-t' : ''), l);
      cell(4, r, 2, 1, SUMV + (i === 0 ? ' border-t' : ''), days ? `<span>${v}</span><span class="w-[36px] ml-[14px] text-[12px]">วัน</span>` : v);
    });

    // weekly totals, lower right
    ['<b class="text-[#ff0000]">( PLAN )</b>&nbsp; งานในสัปดาห์', '<b class="text-[#ff0000]">( PLAN)</b>&nbsp;งานสะสมในสัปดาห์', '<b class="text-[#ff0000]">(ACTUAL)</b>&nbsp;งานในสัปดาห์', '<b class="text-[#ff0000]">(ACTUAL)</b>&nbsp;งานสะสมในสัปดาห์', 'ปริมาณงานที่ใช้กรอกอัปเดทในแต่ละสัปดาห์'].forEach((l, i) => {
      cell(13, 33 + i, 5, 1, WKL + (i === 0 ? ' border-t' : ''), l);
    });
    const weekly = [0.39].concat(Array(8).fill(0.64), Array(8).fill(0.88), [1.38], Array(8).fill(1.63), Array(3).fill(1.87), [2.36, 2.36, 2.60, 2.60, 2.47, 2.47, 2.47, 2.47]).map(v => v.toFixed(2));
    const cum = ['0.391', '1.026', '1.661', '2.297', '2.932', '3.567', '4.203', '4.838', '5.473', '6.353', '7.233', '8.113', '8.993', '9.873', '10.753', '11.632', '12.512', '13.894', '15.521', '17.147', '18.774', '20.401', '22.027', '23.654', '25.280', '26.907', '28.778', '30.648', '32.520', '34.880', '37.241', '39.846', '42.451', '44.916', '47.381', '49.846', '52.311'];
    for (let k = 0; k < 37; k++) {
      cell(18 + k, 33, 1, 1, GV + ' border-t', weekly[k]);
      cell(18 + k, 34, 1, 1, GV, cum[k]);
      cell(18 + k, 35, 1, 1, GV, (k === 0 ? '0.003' : '0.000') + '<i class="absolute left-0 top-0 w-0 h-0 border-t-[5px] border-t-[#008000] border-r-[5px] border-r-transparent"></i>');
      cell(18 + k, 36, 1, 1, GV, '0.003');
    }
    cell(18, 37, 1, 1, GV, '0.003');
  </script>
</body>
</html>
